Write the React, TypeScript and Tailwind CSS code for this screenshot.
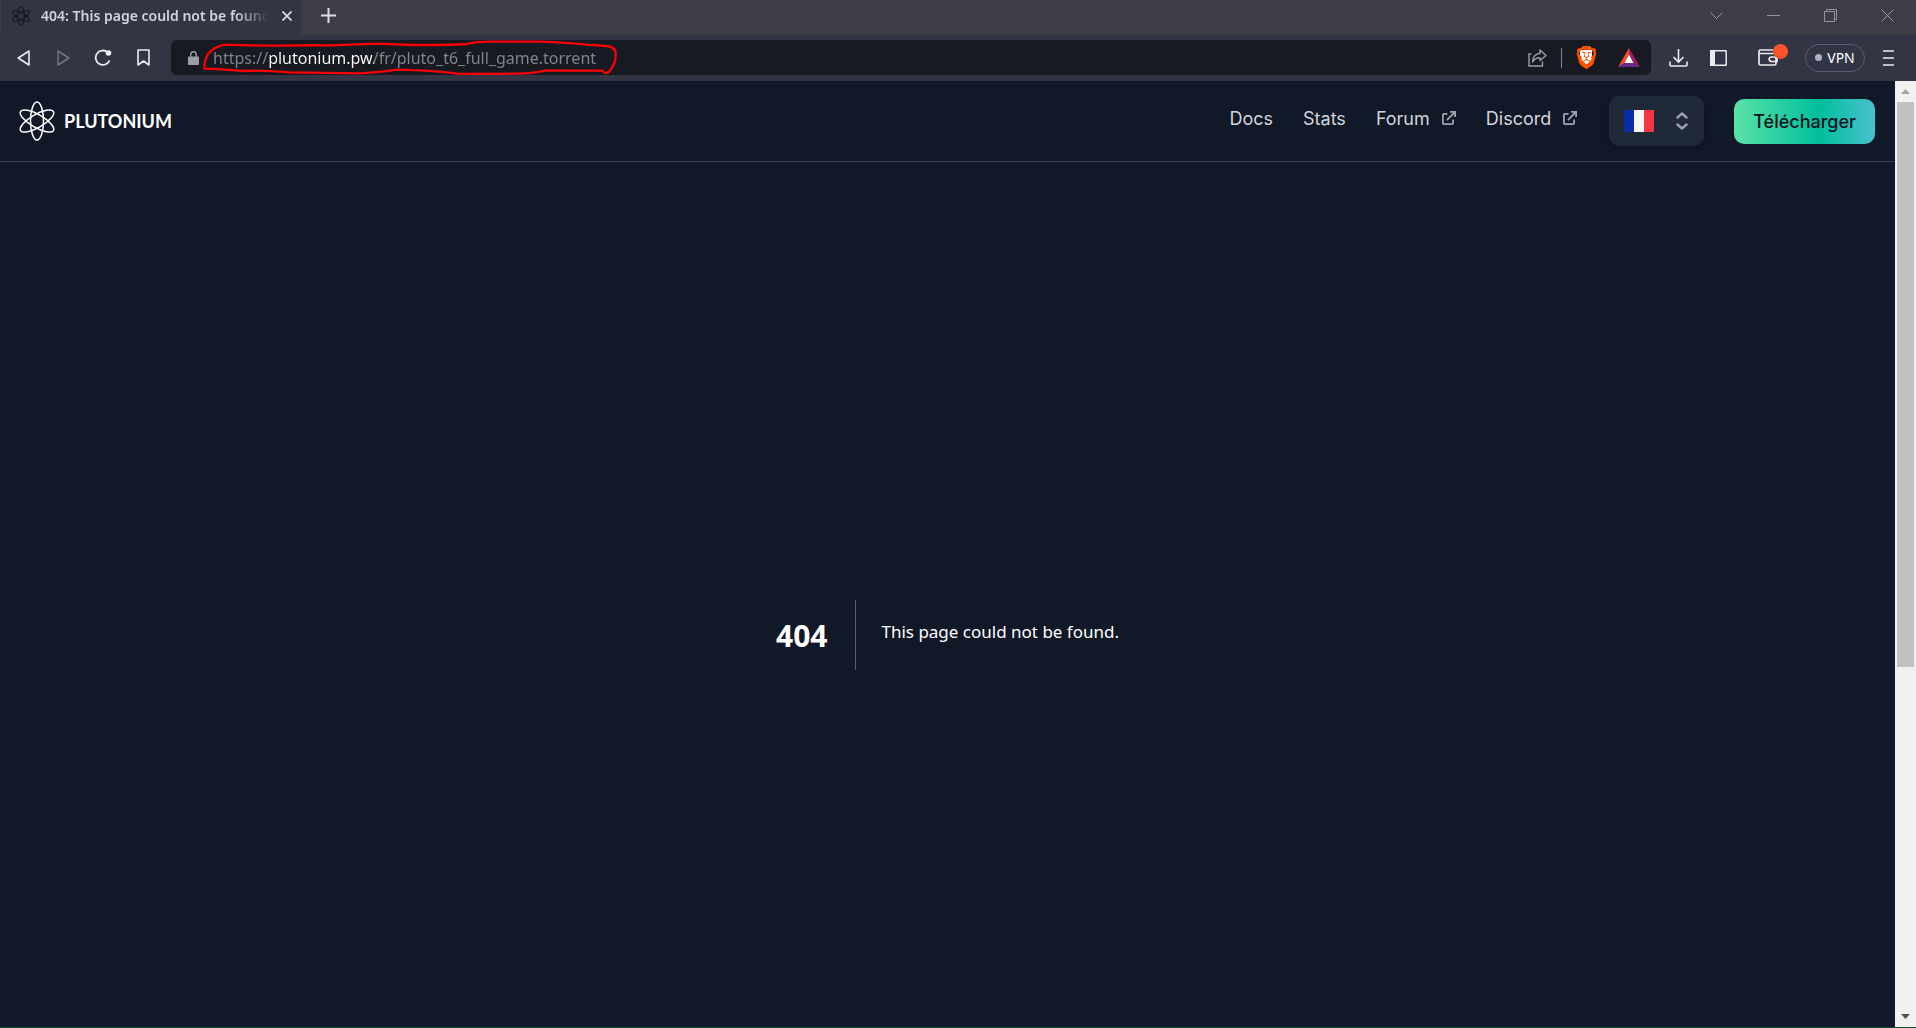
import React, { useState } from "react";
import { SiBrave } from "react-icons/si";

const AtomIcon: React.FC<{ className?: string; strokeWidth?: number }> = ({
  className,
  strokeWidth = 1.5,
}) => (
  <svg
    viewBox="-20 -20 40 40"
    className={className}
    fill="none"
    stroke="currentColor"
    strokeWidth={strokeWidth}
    aria-hidden="true"
  >
    <ellipse rx="6.5" ry="19" />
    <ellipse rx="6.5" ry="19" transform="rotate(60)" />
    <ellipse rx="6.5" ry="19" transform="rotate(120)" />
  </svg>
);

const ExternalIcon: React.FC = () => (
  <svg
    viewBox="0 0 14 14"
    className="h-3.5 w-3.5 text-[#9ca3af]"
    fill="none"
    stroke="currentColor"
    strokeWidth="1.8"
    aria-hidden="true"
  >
    <path d="M5.5 2.9H1.9a1 1 0 0 0-1 1v8.200a1 1 0 0 0 1 1h8.200a1 1 0 0 0 1-1V8.5" />
    <path d="M8 .9h5.100V6M13 1 4.800 9.200" />
  </svg>
);

const TabStrip: React.FC = () => (
  <div className="flex h-[35px] shrink-0 bg-[#3e3d45]">
    <div className="ml-px flex w-[300px] items-center bg-[#333544] pb-1 pl-2.5 pr-1">
      <AtomIcon className="h-5 w-5 shrink-0 text-[#15161c]" strokeWidth={2} />
      <span className="ml-2.5 w-[228px] overflow-hidden whitespace-nowrap text-[14px] font-semibold text-[#d3d4da] [mask-image:linear-gradient(to_right,black_85%,transparent)]">
        404: This page could not be found
      </span>
      <button
        aria-label="Close tab"
        className="ml-2 flex h-5 w-5 items-center justify-center text-[#dcdde2]"
      >
        <svg viewBox="0 0 10 10" className="h-2.5 w-2.5" stroke="currentColor" strokeWidth="1.7">
          <path d="M.5.5l9 9M9.5.5l-9 9" />
        </svg>
      </button>
    </div>
    <button
      aria-label="New tab"
      className="flex w-[54px] items-center justify-center pb-1 text-[#dcdde2]"
    >
      <svg viewBox="0 0 15 15" className="h-[15px] w-[15px]" stroke="currentColor" strokeWidth="2">
        <path d="M7.5 0v15M0 7.5h15" />
      </svg>
    </button>
    <div className="ml-auto flex pb-1 text-[#96959b]">
      <button aria-label="Search tabs" className="flex w-[57px] items-center justify-center">
        <svg viewBox="0 0 13 7" className="h-[7px] w-[13px]" fill="none" stroke="currentColor">
          <path d="M.5.5l6 6 6-6" />
        </svg>
      </button>
      <button aria-label="Minimize" className="flex w-[57px] items-center justify-center">
        <svg viewBox="0 0 13 1" className="h-px w-[13px]">
          <path d="M0 0h13v1H0z" fill="currentColor" />
        </svg>
      </button>
      <button aria-label="Restore" className="flex w-[57px] items-center justify-center">
        <svg viewBox="0 0 13 13" className="h-[13px] w-[13px]" fill="none" stroke="currentColor">
          <path d="M.5 2.5h10v10H.5zM2.5 2.5v-2h10v10h-2" />
        </svg>
      </button>
      <button aria-label="Close" className="flex w-[57px] items-center justify-center">
        <svg viewBox="0 0 13 13" className="h-[13px] w-[13px]" stroke="currentColor">
          <path d="M.5.5l12 12M12.5.5l-12 12" />
        </svg>
      </button>
    </div>
  </div>
);

const AddressBar: React.FC = () => {
  const [url, setUrl] = useState("https://plutonium.pw/fr/pluto_t6_full_game.torrent");

  return (
    <div className="relative ml-2 flex h-[35px] flex-1 items-center rounded-md bg-[#171a21] pl-[17px] pr-2.5">
      <svg viewBox="0 0 11 14" className="h-3.5 w-[11px] shrink-0 text-[#9b9da8]" aria-hidden="true">
        <path d="M1 5.5h9a1 1 0 0 1 1 1V13a1 1 0 0 1-1 1H1a1 1 0 0 1-1-1V6.5a1 1 0 0 1 1-1z" fill="currentColor" />
        <path d="M2.8 6V3.5a2.7 2.7 0 0 1 5.4 0V6" fill="none" stroke="currentColor" strokeWidth="1.4" />
      </svg>
      <input
        type="text"
        aria-label="Address"
        value={url}
        onChange={(e) => setUrl(e.target.value)}
        spellCheck={false}
        className="ml-3.5 min-w-0 flex-1 bg-[linear-gradient(to_right,#85868d_56px,#ffffff_56px,#ffffff_161px,#85868d_161px)] bg-clip-text text-[16px] text-transparent outline-none"
      />
      <svg
        viewBox="69 30 1245 105"
        className="pointer-events-none absolute left-8 top-0 h-[35px] w-[415px] overflow-visible"
        fill="none"
        stroke="#fb0007"
        strokeWidth="7"
        strokeLinejoin="round"
        aria-hidden="true"
      >
        <path d="M73 116 Q74 88 84 72 Q102 50 134 44 Q220 47 300 47 Q380 45 450 46 L590 41 L700 45 Q820 45 860 42 Q890 35 930 35 L1080 35 Q1160 38 1220 44 L1280 48 Q1306 52 1307 68 Q1308 95 1297 110 Q1288 131 1274 129 L1268 122 Q1180 122 1100 121 Q1060 129 1035 130 Q930 133 830 131 Q770 122 650 119 Q600 127 540 130 Q430 128 330 127 Q240 119 190 123 Q120 117 73 116Z" />
      </svg>
      <button aria-label="Share" className="flex h-6 w-6 items-center justify-center text-[#9b9da8]">
        <svg viewBox="0 0 19 18" className="h-[18px] w-[19px]" fill="none" stroke="currentColor" strokeWidth="1.4">
          <path d="M3.5 5H1v12h13.5v-4.5" />
          <path d="M12 1l6 5.500-6 5V8.700C8.500 8.600 6.200 10.300 4.500 13 4.800 8.300 7.300 4.800 12 4.300z" strokeLinejoin="round" />
        </svg>
      </button>
      <div className="ml-3 h-5 w-px bg-[#85868d]" />
      <button aria-label="Brave Shields" className="relative ml-3 flex h-6 w-6 items-center justify-center">
        <span className="absolute h-4 w-3 rounded-b-md bg-white" />
        <SiBrave className="relative h-[23px] w-[23px] text-[#ff5000]" />
      </button>
      <button aria-label="Brave Rewards" className="ml-[19px] flex h-6 w-6 items-center justify-center">
        <svg viewBox="0 0 67 58" className="h-[19px] w-[22px]">
          <path d="M33.5 0L0 58l20-12 13.5-26z" fill="#ff4a24" />
          <path d="M33.5 0L67 58 47 46 33.5 20z" fill="#9e1f63" />
          <path d="M0 58h67L47 46H20z" fill="#662d91" />
          <path d="M33.5 20L20 46h27z" fill="#fff" />
        </svg>
      </button>
    </div>
  );
};

const Toolbar: React.FC = () => (
  <div className="flex h-[46px] shrink-0 items-center bg-[#333544] pb-px pl-[3px] pr-2 text-[#ececf0]">
    <button aria-label="Back" className="flex h-8 w-10 items-center justify-center">
      <svg viewBox="0 0 13 16" className="h-4 w-[13px]" fill="none" stroke="currentColor" strokeWidth="1.6" strokeLinejoin="round">
        <path d="M12 1v14L1.2 8z" />
      </svg>
    </button>
    <button aria-label="Forward" disabled className="flex h-8 w-10 items-center justify-center text-[#74757f]">
      <svg viewBox="0 0 13 16" className="h-4 w-[13px]" fill="none" stroke="currentColor" strokeWidth="1.5" strokeLinejoin="round">
        <path d="M1 1v14l10.8-7z" />
      </svg>
    </button>
    <button aria-label="Reload" className="flex h-8 w-10 items-center justify-center">
      <svg viewBox="0 0 18 17" className="h-[17px] w-[18px]" fill="none" stroke="currentColor" strokeWidth="1.8">
        <path d="M15.5 11.5A7.2 7.2 0 1 1 13.5 3.2" />
        <circle cx="14.5" cy="4" r="2.8" fill="currentColor" stroke="none" />
      </svg>
    </button>
    <button aria-label="Bookmark" className="flex h-8 w-10 items-center justify-center">
      <svg viewBox="0 0 13 17" className="h-[17px] w-[13px]" fill="none" stroke="currentColor" strokeWidth="1.6" strokeLinejoin="round">
        <path d="M1 1h11v15l-5.5-4L1 16z" />
      </svg>
    </button>
    <AddressBar />
    <button aria-label="Downloads" className="ml-[7px] flex h-8 w-10 items-center justify-center">
      <svg viewBox="0 0 19 18" className="h-[18px] w-[19px]" fill="none" stroke="currentColor" strokeWidth="1.6">
        <path d="M9.5 0v12.5M4.5 8l5 5 5-5M1 12.5V16a1 1 0 0 0 1 1h15a1 1 0 0 0 1-1v-3.5" />
      </svg>
    </button>
    <button aria-label="Sidebar" className="flex h-8 w-10 items-center justify-center">
      <svg viewBox="0 0 17 16" className="h-4 w-[17px]" fill="none" stroke="currentColor" strokeWidth="1.5">
        <rect x=".8" y=".8" width="15.4" height="14.4" rx=".5" />
        <path d="M0 0h5v16H0z" fill="currentColor" stroke="none" />
      </svg>
    </button>
    <button aria-label="Wallet" className="relative flex h-8 w-[60px] items-center justify-center">
      <svg viewBox="0 0 20 17" className="h-[17px] w-5" fill="none" stroke="currentColor" strokeWidth="1.7">
        <path d="M15 1H2.5A1.5 1.5 0 0 0 1 2.5v12A1.5 1.5 0 0 0 2.5 16h14a1.5 1.5 0 0 0 1.5-1.5V5.5a1 1 0 0 0-1-1H1.5" />
        <path d="M19 8h-5.5a2.2 2.2 0 0 0 0 4.5H19z" />
      </svg>
      <span className="absolute right-2.5 top-0.5 h-[15px] w-[15px] rounded-full bg-[#fb542b]" />
    </button>
    <button className="ml-[7px] flex h-7 w-[60px] items-center justify-center gap-[5px] rounded-full border border-[#5b5d74] pb-px text-[14px] text-white">
      <span className="h-[7px] w-[7px] rounded-full bg-[#b0b1c4]" />
      VPN
    </button>
    <button aria-label="Menu" className="ml-[3px] flex h-8 w-10 items-center justify-center">
      <svg viewBox="0 0 11 16" className="h-4 w-[11px]" stroke="currentColor" strokeWidth="1.6">
        <path d="M0 1h11M0 8h11M0 15h11" />
      </svg>
    </button>
  </div>
);

const links = [
  { label: "Docs", external: false },
  { label: "Stats", external: false },
  { label: "Forum", external: true },
  { label: "Discord", external: true },
];

const SiteHeader: React.FC = () => (
  <header className="flex h-[81px] shrink-0 items-center border-b border-[#374151] pl-[17px] pr-5">
    <a href="#" className="flex items-center text-white">
      <AtomIcon className="h-10 w-10" />
      <span className="ml-[7px] font-['Lato',sans-serif] text-[18px] font-bold">PLUTONIUM</span>
    </a>
    <nav className="ml-auto flex gap-[30px] pb-1.5 font-['Inter',sans-serif] text-[18px] text-[#d1d5db]">
      {links.map((link) => (
        <a key={link.label} href="#" className="flex items-center gap-3">
          {link.label}
          {link.external && <ExternalIcon />}
        </a>
      ))}
    </nav>
    <button
      aria-label="Français"
      aria-haspopup="listbox"
      className="ml-8 flex h-[50px] w-[95px] items-center justify-between rounded-[10px] bg-[#1f2937] pl-[15px] pr-4 shadow-md"
    >
      <span className="flex h-[22px] w-[30px]">
        <span className="flex-1 bg-[#0a2ca8]" />
        <span className="flex-1 bg-[#f7f7f8]" />
        <span className="flex-1 bg-[#f43645]" />
      </span>
      <svg viewBox="0 0 12 18" className="h-[18px] w-3 text-[#9ca3af]" fill="none" stroke="currentColor" strokeWidth="2.4" strokeLinecap="round" strokeLinejoin="round">
        <path d="M1.500 5.500L6 1.500 10.500 5.500M1.500 12.500L6 16.500l4.500-4" />
      </svg>
    </button>
    <button className="ml-[30px] h-[45px] rounded-[10px] bg-[linear-gradient(to_right,#5ae2a8,#00bf9c_60%,#49c0cd)] px-[19px] font-['Inter',sans-serif] text-[18px] font-medium text-[#0b1220]">
      Télécharger
    </button>
  </header>
);

const Scrollbar: React.FC = () => (
  <div className="flex w-[21px] shrink-0 flex-col bg-[#f1f1f1] px-0.5" aria-hidden="true">
    <div className="flex h-[21px] items-center justify-center">
      <svg viewBox="0 0 9 5" className="h-[5px] w-[9px]">
        <path d="M4.5 0L9 5H0z" fill="#a3a3a3" />
      </svg>
    </div>
    <div className="flex-[5] bg-[#c1c1c1]" />
    <div className="flex-[3]" />
    <div className="flex h-[21px] items-center justify-center">
      <svg viewBox="0 0 9 5" className="h-[5px] w-[9px]">
        <path d="M0 0h9L4.5 5z" fill="#505050" />
      </svg>
    </div>
  </div>
);

const App: React.FC = () => {
  return (
    <div className="flex h-screen flex-col border-b border-[#174a35] font-['Noto_Sans',sans-serif]">
      <TabStrip />
      <Toolbar />
      <div className="flex min-h-0 flex-1">
        <div className="flex min-w-0 flex-1 flex-col overflow-hidden bg-[#111827]">
          <SiteHeader />
          <main className="flex h-full shrink-0 items-center justify-center text-white">
            <h1 className="flex h-[70px] items-center border-r border-white/30 pr-7 text-[30px] font-bold">
              404
            </h1>
            <h2 className="pb-1.5 pl-[25px] text-[17px]">This page could not be found.</h2>
          </main>
        </div>
        <Scrollbar />
      </div>
    </div>
  );
};

export default App;
